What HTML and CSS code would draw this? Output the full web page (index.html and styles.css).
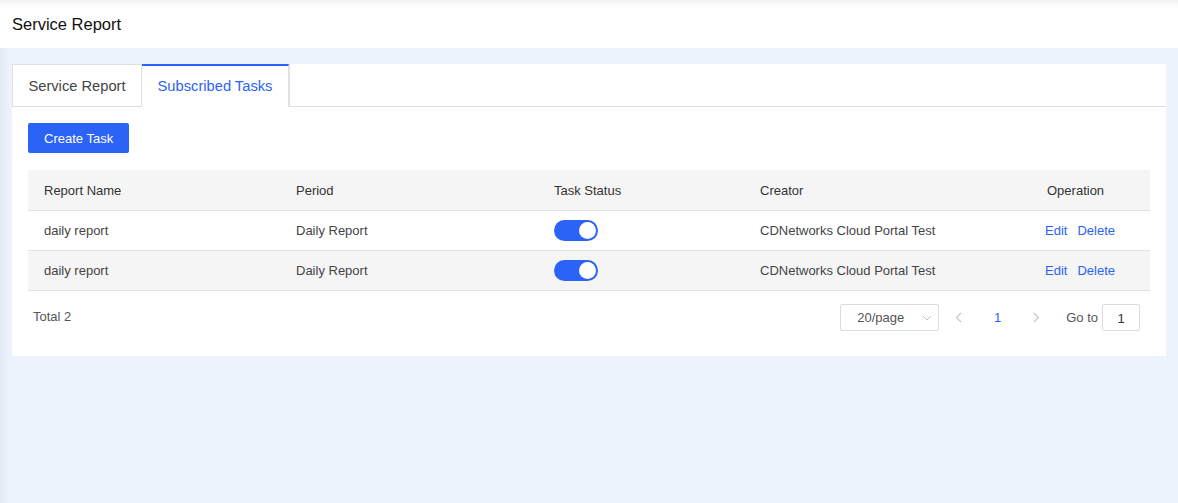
FILE: index.html
```html
<!DOCTYPE html>
<html lang="en">
<head>
    <meta charset="UTF-8">
    <meta name="viewport" content="width=device-width, initial-scale=1.0">
    <title>Service Report</title>
    <link rel="stylesheet" href="styles.css">
</head>
<body>
    <header class="page-header">
        <h1>Service Report</h1>
    </header>

    <main class="content">
        <section class="card">
            <div class="tabs">
                <div class="tab">Service Report</div>
                <div class="tab active">Subscribed Tasks</div>
                <div class="tab-rest"></div>
            </div>

            <div class="card-body">
                <button class="btn-primary" type="button">Create Task</button>

                <table class="task-table">
                    <colgroup>
                        <col style="width: 252px">
                        <col style="width: 258px">
                        <col style="width: 206px">
                        <col style="width: 287px">
                        <col>
                    </colgroup>
                    <thead>
                        <tr>
                            <th>Report Name</th>
                            <th>Period</th>
                            <th>Task Status</th>
                            <th>Creator</th>
                            <th>Operation</th>
                        </tr>
                    </thead>
                    <tbody>
                        <tr>
                            <td>daily report</td>
                            <td>Daily Report</td>
                            <td><span class="switch on"><span class="knob"></span></span></td>
                            <td>CDNetworks Cloud Portal Test</td>
                            <td><a href="#" class="op">Edit</a><a href="#" class="op">Delete</a></td>
                        </tr>
                        <tr class="striped">
                            <td>daily report</td>
                            <td>Daily Report</td>
                            <td><span class="switch on"><span class="knob"></span></span></td>
                            <td>CDNetworks Cloud Portal Test</td>
                            <td><a href="#" class="op">Edit</a><a href="#" class="op">Delete</a></td>
                        </tr>
                    </tbody>
                </table>

                <div class="table-footer">
                    <span class="total">Total 2</span>
                    <div class="pager">
                        <div class="page-size">
                            <span>20/page</span>
                            <svg class="caret" width="10" height="6" viewBox="0 0 10 6"><path d="M1 1l4 4 4-4" fill="none" stroke="#c4c4c4" stroke-width="1"/></svg>
                        </div>
                        <span class="arrow">
                            <svg width="7" height="11" viewBox="0 0 7 11"><path d="M6 1L1.5 5.5 6 10" fill="none" stroke="#c0c4cc" stroke-width="1.1"/></svg>
                        </span>
                        <span class="page-num">1</span>
                        <span class="arrow">
                            <svg width="7" height="11" viewBox="0 0 7 11"><path d="M1 1l4.5 4.5L1 10" fill="none" stroke="#c0c4cc" stroke-width="1.1"/></svg>
                        </span>
                        <span class="goto">Go to</span>
                        <div class="goto-input">1</div>
                    </div>
                </div>
            </div>
        </section>
    </main>
</body>
</html>
```

FILE: styles.css
```css
/* Service report page */
* {
    box-sizing: border-box;
}
body {
    margin: 0;
    font-family: "Liberation Sans", Arial, Helvetica, sans-serif;
    font-size: 13px;
    color: #333;
    background-color: #edf3fd;
    min-height: 503px;
    box-shadow: inset 10px 0 10px -8px rgba(0, 0, 0, 0.06);
}
.page-header {
    height: 48px;
    background-color: #fff;
    display: flex;
    align-items: center;
    padding: 0 12px;
    box-shadow: inset 0 6px 6px -4px rgba(0, 0, 0, 0.08);
}
.page-header h1 {
    margin: 0;
    font-size: 16.5px;
    font-weight: normal;
    color: #111;
}
.content {
    padding: 16px 12px;
}
.card {
    background-color: #fff;
    height: 292px;
}
.tabs {
    display: flex;
    height: 43px;
}
.tab {
    padding: 0 12px;
    font-size: 14.7px;
    color: #444;
    display: flex;
    align-items: center;
    border: 1px solid #e0e0e0;
}
.tab:first-child {
    width: 130px;
    justify-content: center;
}
.tab.active {
    width: 147px;
    justify-content: center;
    color: #2b63f6;
    border-top: 2px solid #2b63f6;
    border-bottom-color: transparent;
    border-left: none;
}
.tab-rest {
    flex: 1;
    border-bottom: 1px solid #e0e0e0;
    border-left: 1px solid #e0e0e0;
}
.card-body {
    padding: 16px 16px 0;
}
.btn-primary {
    height: 30px;
    padding: 0 16px;
    background-color: #2b63f6;
    color: #fff;
    border: none;
    border-radius: 2px;
    font-family: inherit;
    font-size: 13px;
    cursor: pointer;
}
.task-table {
    width: 100%;
    margin-top: 17px;
    border-collapse: collapse;
    table-layout: fixed;
}
.task-table th,
.task-table td {
    height: 40px;
    padding: 1px 16px 0;
    text-align: left;
    font-weight: normal;
    border-bottom: 1px solid #e2e2e2;
    color: #444;
}
.task-table th {
    background-color: #f5f5f5;
    color: #333;
}
.task-table td:last-child {
    padding-left: 14px;
}
.task-table tr.striped td {
    background-color: #f5f5f5;
}
.switch {
    display: inline-block;
    position: relative;
    width: 44px;
    height: 21px;
    border-radius: 11px;
    background-color: #c0c4cc;
    vertical-align: middle;
}
.switch.on {
    background-color: #2b63f6;
}
.switch .knob {
    position: absolute;
    top: 2px;
    left: 2px;
    width: 17px;
    height: 17px;
    border-radius: 50%;
    background-color: #fff;
}
.switch.on .knob {
    left: 25px;
}
.op {
    color: #2b63f6;
    text-decoration: none;
    margin-right: 10px;
}
.table-footer {
    display: flex;
    justify-content: space-between;
    align-items: center;
    height: 53px;
    padding: 0 10px 0 5px;
}
.total {
    color: #555;
    margin-top: -2px;
}
.pager {
    display: flex;
    align-items: center;
}
.page-size {
    width: 99px;
    height: 27px;
    border: 1px solid #dcdcdc;
    border-radius: 2px;
    display: flex;
    align-items: center;
    justify-content: space-between;
    padding: 0 6px 0 16px;
    color: #555;
}
.page-size .caret {
    margin-top: 2px;
}
.arrow {
    width: 39px;
    display: flex;
    justify-content: center;
}
.page-num {
    color: #2b63f6;
    width: 39px;
    text-align: center;
}
.goto {
    margin-left: 10px;
    color: #555;
}
.goto-input {
    width: 38px;
    height: 27px;
    margin-left: 4px;
    border: 1px solid #dcdcdc;
    border-radius: 2px;
    display: flex;
    align-items: center;
    justify-content: center;
    padding-top: 2px;
    color: #333;
}
```
